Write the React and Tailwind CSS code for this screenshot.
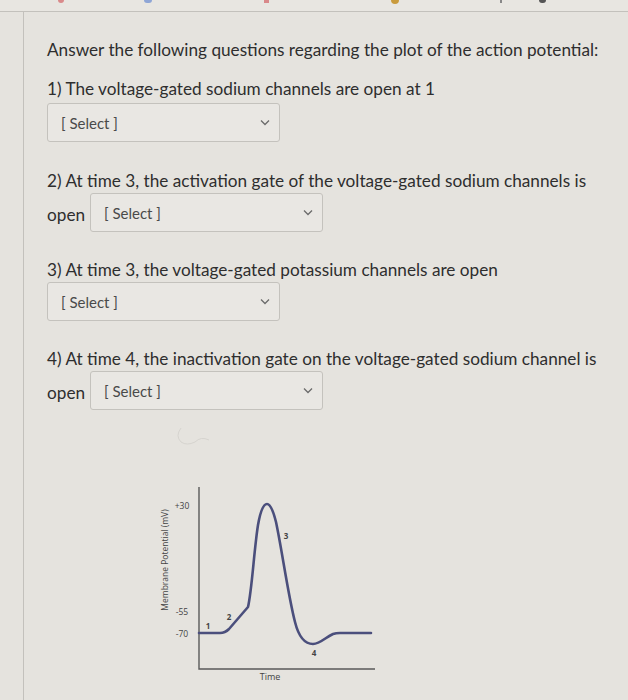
import React from "react";

function Chevron() {
  return (
    <svg width="10" height="7" viewBox="0 0 10 7" className="shrink-0">
      <path d="M1 1.5 L5 5.5 L9 1.5" fill="none" stroke="#6b6b6b" strokeWidth="1.3" />
    </svg>
  );
}

function Select() {
  return (
    <div className="flex h-[39px] w-[233px] items-center justify-between rounded-[3px] border border-[#c4c2bd] bg-[#e9e7e3] pl-[13px] pr-[9px] text-[15px] text-[#4a4a4a]">
      <span>[ Select ]</span>
      <Chevron />
    </div>
  );
}

function Chart() {
  // svg origin at page (140, 480)
  return (
    <svg width="250" height="210" viewBox="0 0 250 210" className="block">
      <path d="M59 7 L59 189 L235 189" fill="none" stroke="#5a5a5a" strokeWidth="1.4" />
      <path
        d="M59 153 L80 153 Q85 153 89 149 L108 127 C112 110 114 70 118 45 C121 28 124 24 127 24 C130 24 133 30 136 42 C142 70 148 115 155 142 C159 158 165 164 173 164 C180 164 186 157 193 154 Q196 153 200 153 L231 153"
        fill="none"
        stroke="#4b4f7c"
        strokeWidth="2.6"
        strokeLinejoin="round"
        strokeLinecap="round"
      />
      <g fontFamily="'Open Sans', 'Liberation Sans', sans-serif" fill="#444">
        <text x="42" y="29" fontSize="8.5" textAnchor="middle">+30</text>
        <text x="42" y="135" fontSize="8.5" textAnchor="middle">-55</text>
        <text x="42" y="157" fontSize="8.5" textAnchor="middle">-70</text>
        <text x="68" y="149" fontSize="8" fontWeight="700" textAnchor="middle">1</text>
        <text x="89" y="140" fontSize="8" fontWeight="700" textAnchor="middle">2</text>
        <text x="146" y="59" fontSize="8" fontWeight="700" textAnchor="middle">3</text>
        <text x="174" y="176" fontSize="8" fontWeight="700" textAnchor="middle">4</text>
        <text x="130" y="200" fontSize="9" textAnchor="middle">Time</text>
        <text x="0" y="0" fontSize="8.5" textAnchor="middle" transform="translate(28 80) rotate(-90)">
          Membrane Potential (mV)
        </text>
      </g>
    </svg>
  );
}

export default function App() {
  return (
    <div
      className="h-[700px] w-[628px] overflow-hidden bg-[#e5e3de] text-[#2e2e2e]"
      style={{ fontFamily: "Lato, 'Open Sans', 'Liberation Sans', sans-serif" }}
    >
      <div className="flex h-[12px] items-start border-b border-[#c3c1bc] bg-[#e8e6e1]">
        <div className="ml-[58px] h-[3px] w-[6px] rounded-b-full bg-[#d98a8a]" />
        <div className="ml-[80px] h-[3px] w-[8px] rounded-b-full bg-[#8fa6d6]" />
        <div className="ml-[112px] h-[3px] w-[5px] bg-[#d9898a]" />
        <div className="ml-[122px] h-[4px] w-[8px] rounded-b-full bg-[#c99b3d]" />
        <div className="ml-[101px] h-[3px] w-[2px] bg-[#888]" />
        <div className="ml-[37px] h-[3px] w-[7px] rounded-b-full bg-[#555]" />
      </div>
      <div className="flex h-[688px]">
        <div className="w-[24px] shrink-0 border-r border-[#c3c1bc]" />
        <div className="flex flex-col pl-[23px] pt-[26px] text-[17.2px] leading-[24px]">
          <p>Answer the following questions regarding the plot of the action potential:</p>
          <p className="mt-[15px]">1) The voltage-gated sodium channels are open at 1</p>
          <div className="mt-[2px]">
            <Select />
          </div>
          <p className="mt-[27px]">2) At time 3, the activation gate of the voltage-gated sodium channels is</p>
          <div className="flex items-center gap-[5px]">
            <span className="pt-[4px]">open</span>
            <Select />
          </div>
          <p className="mt-[26px]">3) At time 3, the voltage-gated potassium channels are open</p>
          <div>
            <Select />
          </div>
          <p className="mt-[26px]">4) At time 4, the inactivation gate on the voltage-gated sodium channel is</p>
          <div className="flex items-center gap-[5px]">
            <span className="pt-[4px]">open</span>
            <Select />
          </div>
          <div className="ml-[128px] mt-[12px] h-[30px]">
            <svg width="40" height="30" viewBox="0 0 40 30">
              <path d="M6 6 Q0 14 6 20 Q12 24 20 20 Q26 14 34 18" fill="none" stroke="#d6d4cf" strokeWidth="1" />
            </svg>
          </div>
          <div className="ml-[93px] mt-[28px]">
            <Chart />
          </div>
        </div>
      </div>
    </div>
  );
}
